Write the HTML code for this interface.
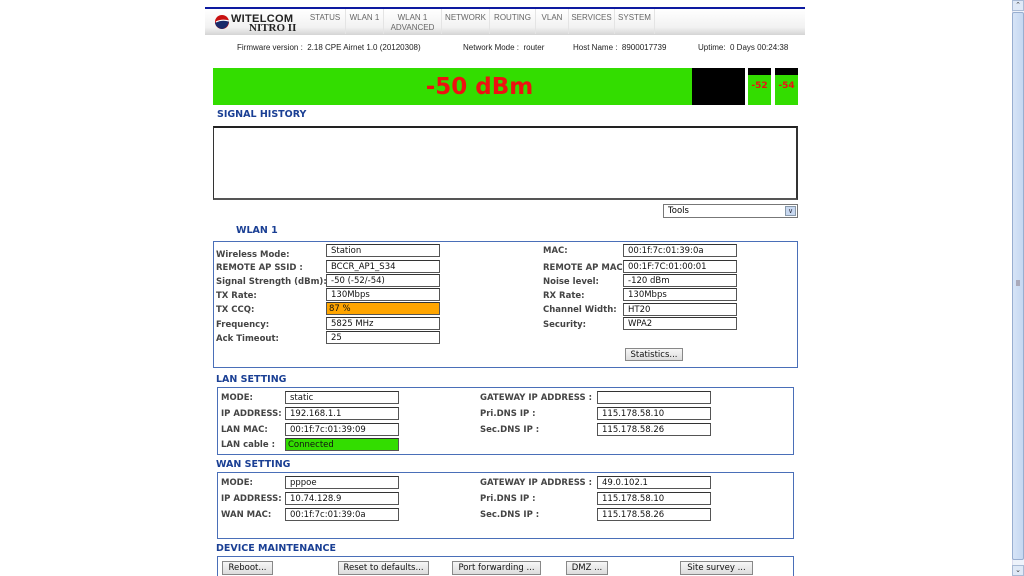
<!DOCTYPE html>
<html style="overflow:hidden"><head><meta charset="utf-8"><style>
*{margin:0;padding:0;box-sizing:border-box}
html,body{width:1024px;height:576px;overflow:hidden}
body{background:#fff;font-family:"DejaVu Sans",Verdana,sans-serif;position:relative}
.a{position:absolute}
.t{font-family:"Liberation Sans",Arial,sans-serif;font-size:8px;color:#222;white-space:nowrap}
.nav{font-family:"Liberation Sans",Arial,sans-serif;font-size:8px;color:#666;text-align:center;line-height:10px;border-right:1px solid #e4e4e4;height:25px;padding-top:4px}
.h{font-size:9.5px;font-weight:bold;color:#1a3f94;white-space:nowrap}
.box{border:1px solid #4a6fb8}
.l{font-size:8.5px;font-weight:bold;color:#444;white-space:nowrap}
.i{border:1px solid #555;border-top-color:#333;height:13px;font-size:8.5px;color:#111;padding-left:4px;line-height:13px;background:#fff;white-space:nowrap}
.b{border:1px solid #888;background:linear-gradient(#f6f6f6,#dcdcdc);height:14px;font-size:8.5px;color:#111;text-align:center;line-height:13px;white-space:nowrap}
</style></head><body>
<div class="a" style="left:205px;top:7px;width:600px;height:2px;background:#0d1aa0"></div>
<div class="a" style="left:205px;top:9px;width:600px;height:26px;background:linear-gradient(#fff,#f2f2f2 70%,#d4d4d4)"></div>
<svg class="a" style="left:214px;top:14px" width="16" height="16"><circle cx="8" cy="8" r="7" fill="#c81010"/><path d="M1 9 Q8 4 15 7 Q14 14 8 15 Q2 14 1 9Z" fill="#1a2a6a"/><path d="M2 8 Q8 5 15 7" stroke="#fff" stroke-width="1.2" fill="none"/></svg>
<div class="a" style="left:231px;top:13px;font-family:'Liberation Sans',Arial;font-weight:bold;font-size:11px;color:#222;letter-spacing:.3px">WITELCOM</div>
<div class="a" style="left:249px;top:22px;font-family:'Liberation Serif',serif;font-weight:bold;font-size:11px;color:#222">NITRO II</div>
<div class="a" style="left:305px;top:9px;display:flex">
<div class="nav" style="width:41px">STATUS</div>
<div class="nav" style="width:38px">WLAN 1</div>
<div class="nav" style="width:58px">WLAN 1<br>ADVANCED</div>
<div class="nav" style="width:48px">NETWORK</div>
<div class="nav" style="width:46px">ROUTING</div>
<div class="nav" style="width:33px">VLAN</div>
<div class="nav" style="width:46px">SERVICES</div>
<div class="nav" style="width:40px">SYSTEM</div>
</div>
<div class="a t" style="left:237px;top:43px">Firmware version :&nbsp; 2.18 CPE Airnet 1.0 (20120308)</div>
<div class="a t" style="left:463px;top:43px">Network Mode :&nbsp; router</div>
<div class="a t" style="left:573px;top:43px">Host Name :&nbsp; 8900017739</div>
<div class="a t" style="left:698px;top:43px">Uptime:&nbsp; 0 Days 00:24:38</div>
<div class="a" style="left:213px;top:68px;width:479px;height:37px;background:#33dd00;padding-left:54px;text-align:center;color:#ee1111;font-weight:bold;font-size:23px;line-height:38px">-50 dBm</div>
<div class="a" style="left:692px;top:68px;width:53px;height:37px;background:#000"></div>
<div class="a" style="left:748px;top:68px;width:23px;height:37px;background:#33dd00;border-top:7px solid #000;color:#ee1111;font-size:9px;line-height:22px;text-align:center;font-weight:bold">-52</div>
<div class="a" style="left:775px;top:68px;width:23px;height:37px;background:#33dd00;border-top:7px solid #000;color:#ee1111;font-size:9px;line-height:22px;text-align:center;font-weight:bold">-54</div>
<div class="a h" style="left:217px;top:109px">SIGNAL HISTORY</div>
<div class="a" style="left:213px;top:126px;width:585px;height:74px;border:1px solid #333;border-top:2px solid #222;border-right:2px solid #333;border-bottom:2px solid #555"></div>
<div class="a" style="left:663px;top:204px;width:135px;height:14px;border:1px solid #777;font-size:8.5px;line-height:12px;padding-left:4px">Tools<div class="a" style="right:1px;top:1px;width:11px;height:10px;background:#c8d8f0;border:1px solid #89a;font-size:7px;line-height:8px;text-align:center;color:#334">&#8744;</div></div>
<div class="a h" style="left:236px;top:225px">WLAN 1</div>
<div class="a box" style="left:213px;top:241px;width:585px;height:127px"></div>
<div class="a l" style="left:216px;top:250px">Wireless Mode:</div><div class="a i" style="left:326px;top:244px;width:114px">Station</div>
<div class="a l" style="left:216px;top:263px">REMOTE AP SSID :</div><div class="a i" style="left:326px;top:260px;width:114px">BCCR_AP1_S34</div>
<div class="a l" style="left:216px;top:277px">Signal Strength (dBm):</div><div class="a i" style="left:326px;top:274px;width:114px">-50 (-52/-54)</div>
<div class="a l" style="left:216px;top:291px">TX Rate:</div><div class="a i" style="left:326px;top:288px;width:114px">130Mbps</div>
<div class="a l" style="left:216px;top:305px">TX CCQ:</div><div class="a i" style="left:326px;top:302px;width:114px;background:#ffa500;padding-left:2px">87 %</div>
<div class="a l" style="left:216px;top:320px">Frequency:</div><div class="a i" style="left:326px;top:317px;width:114px">5825 MHz</div>
<div class="a l" style="left:216px;top:334px">Ack Timeout:</div><div class="a i" style="left:326px;top:331px;width:114px">25</div>
<div class="a l" style="left:543px;top:246px">MAC:</div><div class="a i" style="left:623px;top:244px;width:114px">00:1f:7c:01:39:0a</div>
<div class="a l" style="left:543px;top:263px">REMOTE AP MAC:</div><div class="a i" style="left:623px;top:260px;width:114px">00:1F:7C:01:00:01</div>
<div class="a l" style="left:543px;top:277px">Noise level:</div><div class="a i" style="left:623px;top:274px;width:114px">-120 dBm</div>
<div class="a l" style="left:543px;top:291px">RX Rate:</div><div class="a i" style="left:623px;top:288px;width:114px">130Mbps</div>
<div class="a l" style="left:543px;top:305px">Channel Width:</div><div class="a i" style="left:623px;top:303px;width:114px">HT20</div>
<div class="a l" style="left:543px;top:320px">Security:</div><div class="a i" style="left:623px;top:317px;width:114px">WPA2</div>
<div class="a b" style="left:625px;top:348px;width:58px;height:13px;line-height:12px">Statistics...</div>
<div class="a h" style="left:216px;top:374px">LAN SETTING</div>
<div class="a box" style="left:217px;top:387px;width:577px;height:68px"></div>
<div class="a l" style="left:221px;top:393px">MODE:</div><div class="a i" style="left:285px;top:391px;width:114px">static</div>
<div class="a l" style="left:221px;top:409px">IP ADDRESS:</div><div class="a i" style="left:285px;top:407px;width:114px">192.168.1.1</div>
<div class="a l" style="left:221px;top:425px">LAN MAC:</div><div class="a i" style="left:285px;top:423px;width:114px">00:1f:7c:01:39:09</div>
<div class="a l" style="left:221px;top:440px">LAN cable :</div><div class="a i" style="left:285px;top:438px;width:114px;background:#33dd00;padding-left:2px">Connected</div>
<div class="a l" style="left:480px;top:393px">GATEWAY IP ADDRESS :</div><div class="a i" style="left:597px;top:391px;width:114px"></div>
<div class="a l" style="left:480px;top:409px">Pri.DNS IP :</div><div class="a i" style="left:597px;top:407px;width:114px">115.178.58.10</div>
<div class="a l" style="left:480px;top:425px">Sec.DNS IP :</div><div class="a i" style="left:597px;top:423px;width:114px">115.178.58.26</div>
<div class="a h" style="left:216px;top:459px">WAN SETTING</div>
<div class="a box" style="left:217px;top:472px;width:577px;height:67px"></div>
<div class="a l" style="left:221px;top:478px">MODE:</div><div class="a i" style="left:285px;top:476px;width:114px">pppoe</div>
<div class="a l" style="left:221px;top:494px">IP ADDRESS:</div><div class="a i" style="left:285px;top:492px;width:114px">10.74.128.9</div>
<div class="a l" style="left:221px;top:510px">WAN MAC:</div><div class="a i" style="left:285px;top:508px;width:114px">00:1f:7c:01:39:0a</div>
<div class="a l" style="left:480px;top:478px">GATEWAY IP ADDRESS :</div><div class="a i" style="left:597px;top:476px;width:114px">49.0.102.1</div>
<div class="a l" style="left:480px;top:494px">Pri.DNS IP :</div><div class="a i" style="left:597px;top:492px;width:114px">115.178.58.10</div>
<div class="a l" style="left:480px;top:510px">Sec.DNS IP :</div><div class="a i" style="left:597px;top:508px;width:114px">115.178.58.26</div>
<div class="a h" style="left:216px;top:543px">DEVICE MAINTENANCE</div>
<div class="a box" style="left:217px;top:556px;width:577px;height:20px;border-bottom:none"></div>
<div class="a b" style="left:222px;top:561px;width:51px">Reboot...</div>
<div class="a b" style="left:338px;top:561px;width:91px">Reset to defaults...</div>
<div class="a b" style="left:452px;top:561px;width:89px">Port forwarding ...</div>
<div class="a b" style="left:566px;top:561px;width:42px">DMZ ...</div>
<div class="a b" style="left:680px;top:561px;width:73px">Site survey ...</div>
<div class="a" style="left:1012px;top:0;width:12px;height:576px;background:#eef3fb;border-left:1px solid #dde"></div>
<div class="a" style="left:1012px;top:0;width:12px;height:11px;background:#dfe9f7;border:1px solid #a9bbd6;font-size:7px;text-align:center;line-height:9px;color:#333">&#8963;</div>
<div class="a" style="left:1012px;top:12px;width:12px;height:548px;background:linear-gradient(90deg,#d6e4f7,#c5d7f1);border:1px solid #98aed0;border-radius:2px"></div>
<div class="a" style="left:1016px;top:280px;width:4px;height:6px;background:#aab"></div>
<div class="a" style="left:1012px;top:565px;width:12px;height:11px;background:#dfe9f7;border:1px solid #a9bbd6;font-size:7px;text-align:center;line-height:9px;color:#333">&#8964;</div>
</body></html>
